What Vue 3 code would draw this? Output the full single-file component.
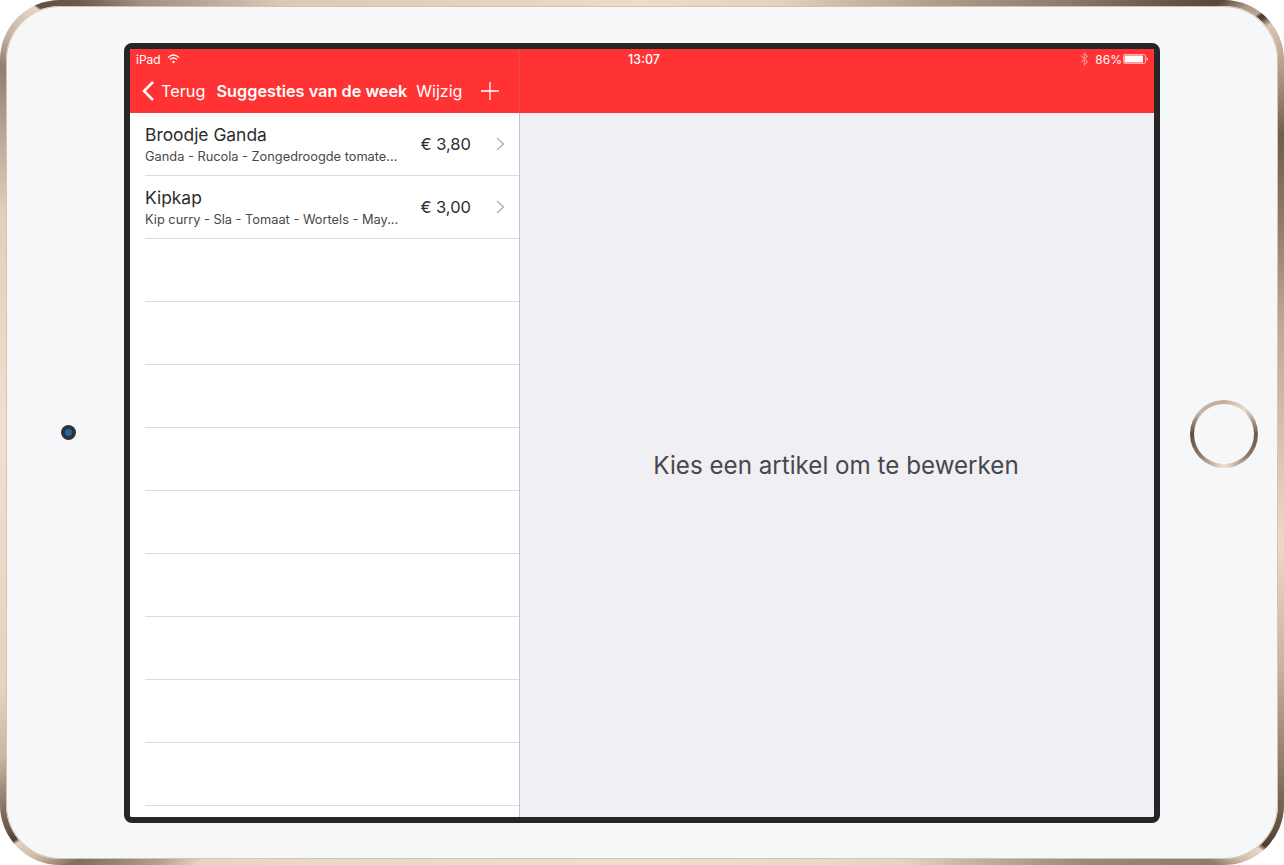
<script setup>
const rows = [
  { title: 'Broodje Ganda', sub: 'Ganda - Rucola - Zongedroogde tomate...', price: '€ 3,80' },
  { title: 'Kipkap', sub: 'Kip curry - Sla - Tomaat - Wortels - May...', price: '€ 3,00' },
  ...Array.from({ length: 9 }, () => null)
]
</script>

<template>
  <div class="device">
    <div class="side">
      <div class="camera"><div class="lens"></div></div>
    </div>
    <div class="screen">
      <header class="bar">
        <div class="status">
          <div class="st-left">
            <span>iPad</span>
            <svg class="wifi" width="13" height="10" viewBox="0 0 13 10">
              <path d="M1 3.6C4.4.4 8.6.4 12 3.6" fill="none" stroke="#fff" stroke-width="1.3"/>
              <path d="M3 5.6c2.2-2 4.8-2 7 0" fill="none" stroke="#fff" stroke-width="1.3"/>
              <path d="M6.5 9.6 4.8 7.6c1-.9 2.4-.9 3.4 0z" fill="#fff"/>
            </svg>
          </div>
          <div class="st-time">13:07</div>
          <div class="st-right">
            <svg class="bt" width="9" height="14" viewBox="0 0 8 13">
              <path d="M1 3.4 6.6 9 3.8 12V1l2.8 3L1 9.6" fill="none" stroke="#fff" stroke-width="1"/>
            </svg>
            <span>86%</span>
            <svg class="batt" width="25" height="10" viewBox="0 0 25 10">
              <rect x=".5" y=".5" width="22" height="9" rx="1.6" fill="none" stroke="#fff" stroke-opacity=".6"/>
              <rect x="1.5" y="1.5" width="18.5" height="7" rx=".6" fill="#fff"/>
              <path d="M23.6 3.4c.8.1 1.2.7 1.2 1.6s-.4 1.5-1.2 1.6z" fill="#fff"/>
            </svg>
          </div>
        </div>
        <nav class="nav">
          <svg class="back" width="14" height="22" viewBox="0 0 14 22">
            <path d="M12 2 3 11l9 9" fill="none" stroke="#fff" stroke-width="2.6"/>
          </svg>
          <span class="back-label">Terug</span>
          <span class="nav-title">Suggesties van de week</span>
          <span class="edit">Wijzig</span>
          <svg class="plus" width="18" height="18" viewBox="0 0 18 18">
            <path d="M9 0v18M0 9h18" fill="none" stroke="#fff" stroke-width="1.3"/>
          </svg>
        </nav>
      </header>
      <div class="panes">
        <aside class="list">
          <div v-for="(r, i) in rows" :key="i" class="row">
            <template v-if="r">
              <div class="row-text">
                <div class="row-title">{{ r.title }}</div>
                <div class="row-sub">{{ r.sub }}</div>
              </div>
              <div class="row-price">{{ r.price }}</div>
              <svg class="chev" width="9" height="14" viewBox="0 0 9 14">
                <path d="M1 1l6.5 6L1 13" fill="none" stroke="#b4b4b8" stroke-width="1.5"/>
              </svg>
            </template>
          </div>
        </aside>
        <main class="detail">Kies een artikel om te bewerken</main>
      </div>
    </div>
    <div class="side">
      <div class="home"></div>
    </div>
  </div>
</template>

<style scoped>
.device {
  box-sizing: border-box;
  width: 1284px;
  height: 865px;
  display: grid;
  grid-template-columns: 118px 1036px 118px;
  border: 6px solid transparent;
  border-radius: 60px;
  box-shadow: inset 0 0 0 1px #d6c3b0;
  background:
    linear-gradient(#f5f7f9, #f5f7f9) padding-box,
    conic-gradient(from 0deg at 50% 50%,
      #eedcc9 0deg, #e4d2bf 18deg, #b9a592 32deg, #8f7c6a 44.5deg, #584839 53.3deg, #a89886 54.8deg, #b7a693 55.8deg,
      #4f4035 56deg, #4f4035 56.3deg, #d8c5b2 57deg, #b6a28f 60deg, #6f5d4c 65deg, #8f7c6a 72deg, #bba794 80deg, #ecd9c6 100deg, #c8b4a0 110deg, #8a7866 118deg, #5f4f40 122deg, #4f4035 123.6deg,
      #eadccb 124deg, #cdbba8 125.5deg, #8f7d6b 127deg, #9b8a77 134deg, #e6d5c2 149deg, #efdfcd 180deg, #e8d6c3 225.8deg, #b4a18e 228.3deg, #7f6e5c 232.8deg, #cdb9a6 235deg, #e2cfbc 236.7deg,
      #4f4035 237deg, #6b5a4a 238deg, #7a6a58 239deg, #c9b5a2 243deg, #e6d2bf 248deg, #f2dfcd 270deg, #e3cfbb 289deg, #b9a896 295deg, #8f7f6d 299.8deg, #c4b19e 302deg, #e8d7c3 305deg,
      #5f4f40 305.2deg, #6d5c4c 307.4deg, #a39180 310.6deg, #dcc9b6 320deg, #eedcc9 360deg) border-box;
  font-family: Inter, "Noto Sans", sans-serif;
  overflow: hidden;
}
.side {
  display: flex;
  align-items: center;
  justify-content: center;
  padding-top: 1px;
}
.camera {
  width: 15px;
  height: 15px;
  margin-left: 6px;
  margin-top: -2px;
  border-radius: 50%;
  background: #2f3338;
  display: flex;
  align-items: center;
  justify-content: center;
}
.lens {
  width: 7px;
  height: 7px;
  border-radius: 50%;
  background: #1a69a8;
}
.home {
  box-sizing: border-box;
  width: 68px;
  height: 68px;
  margin-left: 10px;
  margin-top: 2px;
  border: 4px solid transparent;
  border-radius: 50%;
  background:
    linear-gradient(#f5f7f9, #f5f7f9) padding-box,
    conic-gradient(#c0ad99 0deg, #ecddcc 40deg, #6d5b49 90deg, #8a7765 130deg, #f0e2d2 180deg, #8b7866 230deg, #5f4e3e 270deg, #c8b6a3 310deg, #c0ad99 360deg) border-box;
}
.screen {
  box-sizing: border-box;
  margin-top: 37px;
  width: 1036px;
  height: 780px;
  border: 6px solid #252628;
  border-radius: 8px;
  background: #fff;
  display: flex;
  flex-direction: column;
  overflow: hidden;
}
.bar {
  position: relative;
  flex: none;
  height: 64px;
  background: #ff3333;
  color: #fff;
}
.bar::after {
  content: "";
  position: absolute;
  left: 389px;
  top: 0;
  bottom: 0;
  width: 1px;
  background: #e8474b;
}
.status {
  height: 20px;
  padding: 0 6px;
  display: grid;
  grid-template-columns: 1fr auto 1fr;
  align-items: center;
  font-size: 12px;
}
.st-left { display: flex; align-items: center; gap: 6px; }
.wifi { margin-top: -1px; }
.st-time { font-weight: 500; font-size: 12.5px; padding-left: 4px; }
.st-right { display: flex; align-items: center; justify-content: flex-end; gap: 6px; }
.bt { opacity: .45; }
.batt { margin-left: -5px; }
.nav {
  width: 389px;
  height: 44px;
  box-sizing: border-box;
  display: flex;
  align-items: center;
  font-size: 16.3px;
}
.back { margin-left: 11px; flex: none; }
.back-label { margin-left: 6px; }
.nav-title { margin-left: 11px; font-weight: 600; white-space: nowrap; }
.edit { margin-left: 9px; font-size: 16px; }
.plus { margin-left: 19px; flex: none; }
.panes {
  flex: 1;
  min-height: 0;
  display: flex;
}
.list {
  box-sizing: border-box;
  width: 390px;
  flex: none;
  border-right: 1px solid #c3c3c8;
  overflow: hidden;
  background: #fff;
}
.row {
  box-sizing: border-box;
  height: 63px;
  margin-left: 15px;
  padding-right: 14px;
  border-bottom: 1px solid #dcdcdf;
  display: flex;
  align-items: center;
}
.row-text { flex: 1; min-width: 0; padding-top: 2px; }
.row-title {
  font-size: 17.4px;
  line-height: 22px;
  color: #2c2c2e;
}
.row-sub {
  font-size: 12.8px;
  line-height: 20px;
  margin-top: 1px;
  color: #48484a;
  white-space: nowrap;
}
.row-price {
  font-size: 16.5px;
  color: #2c2c2e;
  margin-left: 8px;
}
.chev { margin-left: 25px; flex: none; }
.detail {
  flex: 1;
  background: #efeff4;
  color: #48484c;
  font-size: 24.2px;
  display: flex;
  align-items: center;
  justify-content: center;
  padding-right: 2px;
}
</style>
